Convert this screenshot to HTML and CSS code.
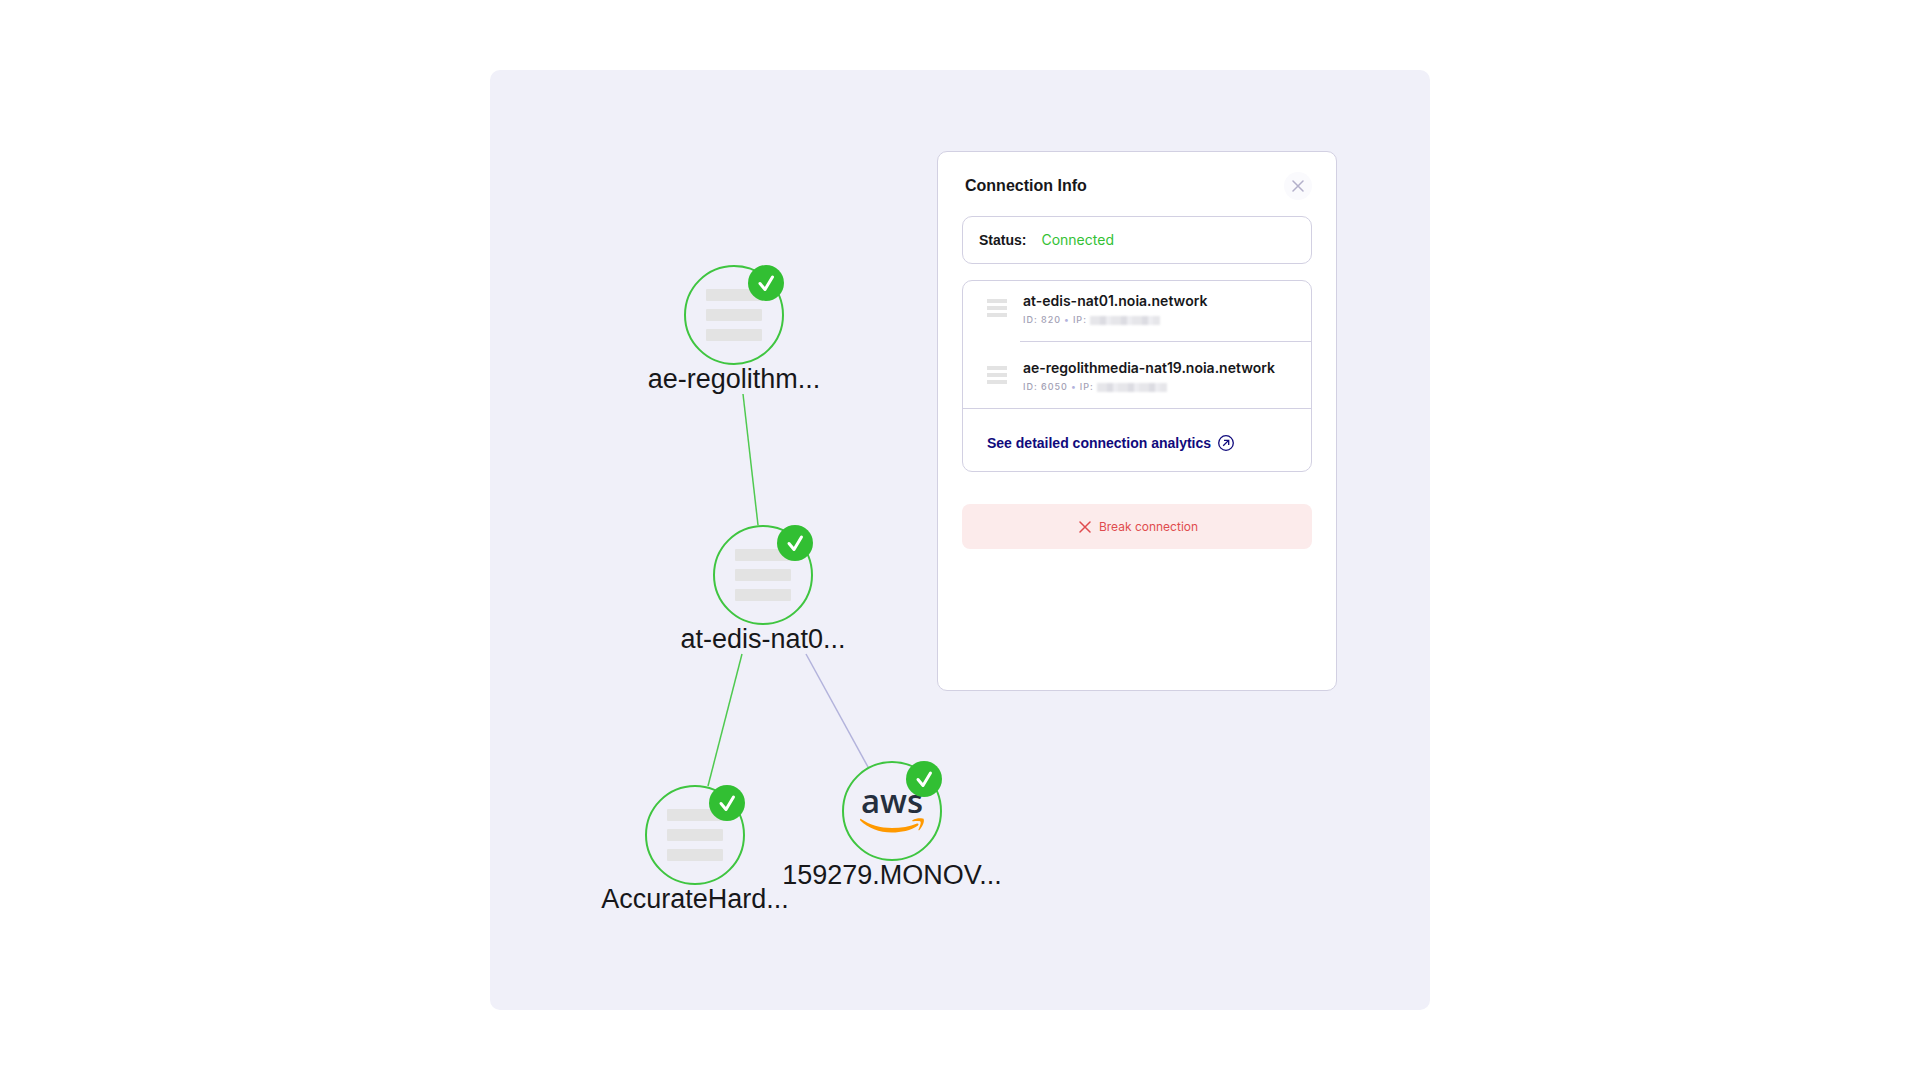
FILE: index.html
```
<!DOCTYPE html>
<html lang="en">

<head>
    <meta charset="UTF-8">
    <meta name="viewport" content="width=device-width, initial-scale=1.0">
    <title>Connection Info</title>
    <link rel="stylesheet" href="styles.css">
</head>

<body>
    <!-- shared icons -->
    <svg class="defs" aria-hidden="true">
        <symbol id="check" viewBox="0 0 36 36">
            <path d="M12 18.500l5 6 7.500-12.500" fill="none" stroke="#fff" stroke-width="3" stroke-linecap="round" stroke-linejoin="round" />
        </symbol>
        <symbol id="cross" viewBox="0 0 12 12">
            <path d="M1 1l10 10M11 1L1 11" fill="none" stroke="currentColor" stroke-width="1.5" stroke-linecap="round" />
        </symbol>
    </svg>

    <main class="stage">
        <svg class="edges" aria-hidden="true">
            <line class="edge" x1="253" y1="324" x2="268" y2="455" />
            <line class="edge" x1="252" y1="584" x2="218" y2="716" />
            <line class="edge idle" x1="316" y1="584" x2="378" y2="697" />
        </svg>

        <div class="node node-ae">
            <div class="circle">
                <div class="bars"><i></i><i></i><i></i></div>
                <svg class="badge"><use href="#check" /></svg>
            </div>
            <span class="label">ae-regolithm...</span>
        </div>
        <div class="node node-at">
            <div class="circle">
                <div class="bars"><i></i><i></i><i></i></div>
                <svg class="badge"><use href="#check" /></svg>
            </div>
            <span class="label">at-edis-nat0...</span>
        </div>
        <div class="node node-hard">
            <div class="circle">
                <div class="bars"><i></i><i></i><i></i></div>
                <svg class="badge"><use href="#check" /></svg>
            </div>
            <span class="label">AccurateHard...</span>
        </div>
        <div class="node node-aws">
            <div class="circle">
                <div class="aws">
                    <span>aws</span>
                    <svg viewBox="0 0 64 15">
                        <path d="M1 1C10 7 20 10 32 10 41 10 50 8.500 57 5.500 58.500 5 59 6.500 58 7.500 51 12.500 41 14.500 32 14.500 19 14.500 8 10 .3 2.500 -.3 1.500 .2 .5 1 1z" />
                        <path d="M52.500 2.200C56 -.2 62 -.2 63.500 .8 65 3.500 62 9.500 59.500 12 58.800 12.600 58.200 12.300 58.500 11.500 59.500 9 61.300 5 60.500 3.800 59.700 2.800 56 3.100 53.500 3.300 52.300 3.500 51.800 2.800 52.500 2.200z" />
                    </svg>
                </div>
                <svg class="badge"><use href="#check" /></svg>
            </div>
            <span class="label">159279.MONOV...</span>
        </div>

        <section class="panel">
            <header>
                <h1>Connection Info</h1>
                <button class="close" aria-label="Close"><svg><use href="#cross" /></svg></button>
            </header>
            <div class="box status">
                <b>Status:</b>
                <span>Connected</span>
            </div>
            <div class="box info">
                <div class="row">
                    <div class="bars small"><i></i><i></i><i></i></div>
                    <div class="host">
                        <h2>at-edis-nat01.noia.network</h2>
                        <p>ID: 820 <em>•</em> IP: <span class="masked"></span></p>
                    </div>
                </div>
                <div class="row">
                    <div class="bars small"><i></i><i></i><i></i></div>
                    <div class="host">
                        <h2>ae-regolithmedia-nat19.noia.network</h2>
                        <p>ID: 6050 <em>•</em> IP: <span class="masked"></span></p>
                    </div>
                </div>
                <a class="more" href="#">
                    See detailed connection analytics
                    <svg viewBox="0 0 16 16">
                        <circle cx="8" cy="8" r="7.300" />
                        <path d="M5.200 10.800l5.400-5.400M6 5.300h4.700V10" />
                    </svg>
                </a>
            </div>
            <button class="break"><svg><use href="#cross" /></svg>Break connection</button>
        </section>
    </main>
</body>

</html>
```

FILE: styles.css
```
* {
    box-sizing: border-box;
    padding: 0;
    margin: 0;
}

body {
    min-height: 100vh;
    display: flex;
    justify-content: center;
    align-items: center;
    background: #fff;
    color: #17171a;
    font-family: Inter, "Liberation Sans", sans-serif;
}

button {
    border: 0;
    font-family: inherit;
    cursor: pointer;
}

.defs {
    position: absolute;
    width: 0;
    height: 0;
}

.stage {
    position: relative;
    width: 100%;
    max-width: 940px;
    min-height: 940px;
    padding: 81px 93px;
    display: flex;
    justify-content: flex-end;
    align-items: flex-start;
    background: #f0f0f9;
    border-radius: 10px;
}

/* graph */
.edges {
    position: absolute;
    top: 0;
    left: 0;
    width: 100%;
    height: 100%;
}

.edge {
    stroke: #4fc950;
    stroke-width: 1.5;
}

.edge.idle {
    stroke: #b3b3dc;
}

.node {
    position: absolute;
    width: 100px;
    display: flex;
    flex-direction: column;
    align-items: center;
}

.node-ae {
    left: 194px;
    top: 195px;
}

.node-at {
    left: 223px;
    top: 455px;
}

.node-hard {
    left: 155px;
    top: 715px;
}

.node-aws {
    left: 352px;
    top: 691px;
}

.circle {
    position: relative;
    width: 100px;
    height: 100px;
    display: flex;
    justify-content: center;
    align-items: center;
    border: 2px solid #3fc540;
    border-radius: 50%;
}

.badge {
    position: absolute;
    top: -2px;
    right: -2px;
    width: 36px;
    height: 36px;
    background: #32bf33;
    border-radius: 50%;
}

.label {
    font-family: "Liberation Sans", sans-serif;
    font-size: 27px;
    line-height: 28px;
    white-space: nowrap;
}

.bars {
    width: 56px;
    display: flex;
    flex-direction: column;
    gap: 8px;
}

.bars i {
    height: 12px;
    background: #e3e3e3;
    border-radius: 1px;
}

.bars.small {
    width: 20px;
    gap: 3px;
}

.bars.small i {
    height: 4px;
    border-radius: 0;
}

.aws {
    display: flex;
    flex-direction: column;
    align-items: center;
    padding-bottom: 5px;
}

.aws span {
    color: #252f3e;
    font-family: "Open Sans", sans-serif;
    font-size: 33px;
    font-weight: 600;
    line-height: 34px;
}

.aws svg {
    width: 64px;
    height: 15px;
    fill: #ff9900;
}

/* panel */
.panel {
    position: relative;
    width: 400px;
    min-height: 540px;
    padding: 20px 24px;
    background: #fff;
    border: 1px solid #d2d0e2;
    border-radius: 10px;
}

.panel header {
    display: flex;
    justify-content: space-between;
    align-items: center;
    padding-left: 3px;
    margin-bottom: 16px;
}

h1,
.status b,
.more {
    font-family: "Liberation Sans", sans-serif;
    font-weight: 700;
}

h1 {
    font-size: 16px;
    line-height: 28px;
}

.close {
    width: 28px;
    height: 28px;
    display: flex;
    justify-content: center;
    align-items: center;
    background: #fafafd;
    border-radius: 50%;
    color: #b3b0ca;
}

.close svg,
.break svg {
    width: 12px;
    height: 12px;
}

.box {
    border: 1px solid #d2d0e2;
    border-radius: 10px;
}

.status {
    height: 48px;
    display: flex;
    align-items: center;
    gap: 15px;
    padding: 0 16px 1px;
    margin-bottom: 16px;
    font-size: 14px;
}

.status span {
    color: #33c134;
}

.row {
    display: flex;
    gap: 13px;
    padding-left: 24px;
}

.row .bars {
    margin-top: 18px;
}

.host {
    flex: 1;
    height: 61px;
    padding: 11px 0 0 3px;
    border-bottom: 1px solid #d2d0e2;
}

.row + .row {
    border-bottom: 1px solid #d2d0e2;
}

.row + .row .host {
    height: 66px;
    padding-top: 17px;
    border-bottom: 0;
}

.row + .row .bars {
    margin-top: 24px;
}

h2 {
    font-size: 14px;
    font-weight: 600;
    line-height: 18px;
}

.host p {
    display: flex;
    align-items: center;
    gap: 3px;
    color: #a3a1b5;
    font-size: 9px;
    font-weight: 500;
    line-height: 20px;
    letter-spacing: 1px;
}

.host em {
    color: #b3b3dc;
    font-style: normal;
}

.masked {
    width: 70px;
    height: 9px;
    background: repeating-linear-gradient(90deg, #e6e6ea 0 10px, #dcdce2 10px 16px, #ededf1 16px 21px);
    filter: blur(1px);
}

.more {
    display: flex;
    align-items: center;
    gap: 7px;
    height: 62px;
    padding: 6px 24px 0;
    color: #100a7c;
    font-size: 14px;
    text-decoration: none;
}

.more svg {
    width: 16px;
    height: 16px;
    fill: none;
    stroke: #100a7c;
    stroke-width: 1.3;
}

.break {
    width: 100%;
    height: 45px;
    display: flex;
    justify-content: center;
    align-items: center;
    gap: 8px;
    padding-left: 3px;
    margin-top: 32px;
    background: #fcebeb;
    border-radius: 8px;
    color: #e04b4e;
    font-size: 12px;
}
```
